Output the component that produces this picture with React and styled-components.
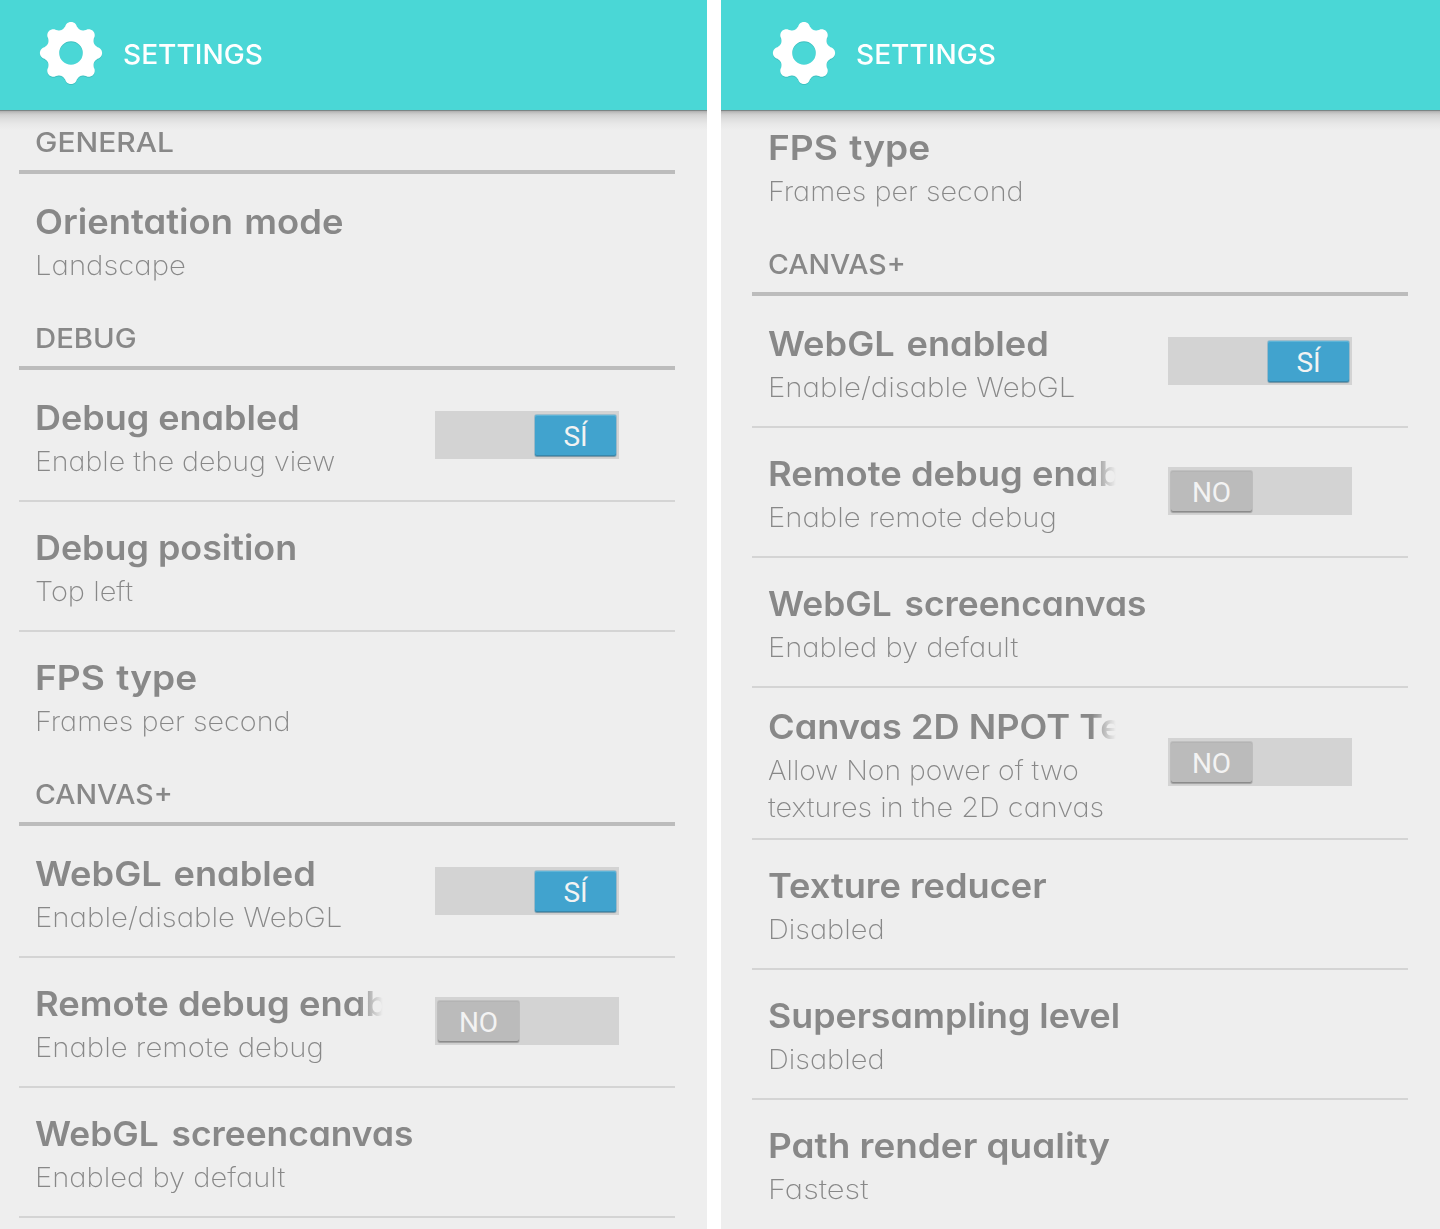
import React from "react";
import styled, { createGlobalStyle, css } from "styled-components";

const GlobalStyle = createGlobalStyle`
  * { box-sizing: border-box; }
  body {
    margin: 0;
    background: #fff;
    color: #888;
    font-family: Inter, "Liberation Sans", sans-serif;
    font-feature-settings: "cv11" 1;
  }
`;

const Screens = styled.main`
  display: grid;
  grid-template-columns: 707px 719px;
  column-gap: 14px;
  height: 1229px;
  overflow: hidden;
`;

const Screen = styled.section`
  display: flex;
  flex-direction: column;
  height: 1229px;
  overflow: hidden;
  background: #eee;
  --inset: ${(p) => p.$inset}px;
`;

const TopBar = styled.header`
  position: relative;
  z-index: 1;
  flex: none;
  display: flex;
  align-items: center;
  gap: 20px;
  height: 111px;
  padding: 0 0 3px calc(39px + var(--inset));
  background: #4ad7d6;
  border-bottom: 1px solid #7b8585;
`;

const Wide = styled.span`
  display: inline-block;
  transform: scaleX(${(p) => p.$ratio});
  transform-origin: 0 50%;
  word-spacing: ${(p) => p.$gap || 0}px;
`;

const Title = styled.h1`
  margin: 0;
  color: #fff;
  font-size: 27.5px;
  font-weight: 500;
  line-height: 40px;
`;

const Gear = styled.svg`
  display: block;
  width: 64px;
  height: 64px;
  margin-bottom: 2px;
  filter: drop-shadow(0 1px 0.5px rgba(0, 80, 80, 0.16));
`;

const Viewport = styled.div`
  flex: 1;
  min-height: 0;
  overflow: hidden;
  background: linear-gradient(
    #adadad 0,
    #c4c4c4 2px,
    #d2d2d2 4px,
    #dedede 8px,
    #e8e8e8 13px,
    #eee 19px
  );
`;

const List = styled.div`
  width: 656px;
  margin-left: calc(19px + var(--inset));
  margin-top: ${(p) => -p.$scrolled}px;
`;

const SectionHeading = styled.h2`
  height: 66px;
  margin: 0 0 2px;
  padding: 14px 16px 0;
  border-bottom: 4px solid #bcbcbc;
  font-size: 27.5px;
  font-weight: 530;
  line-height: 40px;
`;

const Row = styled.div`
  display: flex;
  align-items: center;
  justify-content: space-between;
  box-sizing: content-box;
  min-height: ${(p) => (p.$tall ? 150 : 128)}px;
  padding: 0 56px 0 16px;
  ${(p) => p.$divider && css`border-bottom: 2px solid #d4d4d4;`}
`;

const Labels = styled.div`
  flex: ${(p) => (p.$narrow ? "0 0 349px" : "1")};
  min-width: 0;
  padding-top: ${(p) => (p.$tall ? 1 : 0)}px;
`;

const Name = styled.div`
  white-space: nowrap;
  font-size: 34.4px;
  font-weight: 600;
  line-height: 50px;
  height: 50px;
  ${(p) =>
    p.$fade &&
    css`
      overflow: hidden;
      mask-image: linear-gradient(to left, transparent 1px, #000 25px);
    `}
`;

const Summary = styled.div`
  white-space: nowrap;
  font-size: 27.5px;
  font-weight: 200;
  line-height: 37px;
  height: 37px;
`;

const Track = styled.div`
  flex: none;
  display: flex;
  justify-content: ${(p) => (p.$on ? "flex-end" : "flex-start")};
  width: 184px;
  height: 48px;
  margin-bottom: 2px;
  padding: 4px 3px 3px;
  background: #d3d3d3;
`;

const Thumb = styled.div`
  width: 81px;
  height: 41px;
  border-radius: 2px;
  color: #f3f3f3;
  font-family: Roboto, "Liberation Sans", sans-serif;
  font-size: 28px;
  font-weight: 400;
  line-height: 43px;
  text-align: center;
  background: ${(p) => (p.$on ? "#41a3ce" : "#bbb")};
  box-shadow: ${(p) =>
    p.$on
      ? "inset 0 1px #5fb5d8, inset 0 -1px #3887ab, 0 0 0 1px rgba(65,150,190,.35), 0 1px 1px rgba(0,0,0,.3)"
      : "inset 0 1px #b4b4b4, inset 0 -1px #8b8b8b, 0 0 0 1px rgba(150,150,150,.3), 0 1px 1px rgba(0,0,0,.2)"};
`;

const gearOutline = (() => {
  const points = [];
  for (let i = 0; i < 320; i += 1) {
    const a = (i / 320) * Math.PI * 2;
    const wave = Math.cos(8 * a);
    const r = 28 + 3.1 * Math.sign(wave) * Math.abs(wave) ** 0.72;
    points.push(`${(32 + r * Math.cos(a)).toFixed(2)} ${(32 + r * Math.sin(a)).toFixed(2)}`);
  }
  return `M${points.join("L")}Z`;
})();

function GearIcon() {
  return (
    <Gear viewBox="0 0 64 64" aria-hidden="true">
      <path
        fill="#fff"
        fillRule="evenodd"
        d={`${gearOutline}M43.8 32A11.8 11.8 0 1 0 20.2 32A11.8 11.8 0 1 0 43.8 32Z`}
      />
    </Gear>
  );
}

function Toggle({ on }) {
  return (
    <Track $on={on} role="switch" aria-checked={on}>
      <Thumb $on={on}>{on ? "SÍ" : "NO"}</Thumb>
    </Track>
  );
}

const fps = { name: "FPS type", ratio: 1.078, gap: 2, lines: [["Frames per second", 1.047]] };

const webgl = [
  { name: "WebGL enabled", ratio: 1.053, gap: 2.5, lines: [["Enable/disable WebGL", 1.07]], on: true },
  { name: "Remote debug enabled", ratio: 1.058, lines: [["Enable remote debug", 1.066]], on: false },
  { name: "WebGL screencanvas", ratio: 1.027, gap: 4, lines: [["Enabled by default", 1.059]] },
];

const leftScreen = [
  {
    heading: "GENERAL",
    ratio: 1.09,
    rows: [{ name: "Orientation mode", ratio: 1.058, gap: 2, lines: [["Landscape", 1.067]] }],
  },
  {
    heading: "DEBUG",
    ratio: 1.065,
    rows: [
      { name: "Debug enabled", ratio: 1.046, lines: [["Enable the debug view", 1.038]], on: true },
      { name: "Debug position", ratio: 1.043, lines: [["Top left", 1.054]] },
      fps,
    ],
  },
  { heading: "CANVAS+", ratio: 1.036, rows: webgl, continues: true },
];

const rightScreen = [
  { rows: [fps] },
  {
    heading: "CANVAS+",
    ratio: 1.036,
    rows: [
      ...webgl,
      {
        name: "Canvas 2D NPOT Textures",
        ratio: 1.052,
        lines: [
          ["Allow Non power of two", 1.028],
          ["textures in the 2D canvas", 1.05],
        ],
        on: false,
      },
      { name: "Texture reducer", ratio: 1.053, lines: [["Disabled", 1.055]] },
      { name: "Supersampling level", ratio: 1.04, lines: [["Disabled", 1.055]] },
      { name: "Path render quality", ratio: 1.073, lines: [["Fastest", 1.123]] },
    ],
  },
];

function Setting({ item, divider }) {
  const hasToggle = item.on !== undefined;
  const tall = item.lines.length > 1;
  return (
    <Row $divider={divider} $tall={tall}>
      <Labels $narrow={hasToggle} $tall={tall}>
        <Name $fade={hasToggle}>
          <Wide $ratio={item.ratio} $gap={item.gap}>{item.name}</Wide>
        </Name>
        {item.lines.map(([line, ratio]) => (
          <Summary key={line}>
            <Wide $ratio={ratio}>{line}</Wide>
          </Summary>
        ))}
      </Labels>
      {hasToggle && <Toggle on={item.on} />}
    </Row>
  );
}

function SettingsScreen({ sections, inset, scrolled }) {
  return (
    <Screen $inset={inset}>
      <TopBar>
        <GearIcon />
        <Title>
          <Wide $ratio={1.022}>SETTINGS</Wide>
        </Title>
      </TopBar>
      <Viewport>
        <List $scrolled={scrolled}>
          {sections.map((section, s) => (
            <React.Fragment key={s}>
              {section.heading && (
                <SectionHeading>
                  <Wide $ratio={section.ratio}>{section.heading}</Wide>
                </SectionHeading>
              )}
              {section.rows.map((item, i) => (
                <Setting
                  key={item.name}
                  item={item}
                  divider={section.continues || i < section.rows.length - 1}
                />
              ))}
            </React.Fragment>
          ))}
        </List>
      </Viewport>
    </Screen>
  );
}

export default function App() {
  return (
    <>
      <GlobalStyle />
      <Screens>
        <SettingsScreen sections={leftScreen} inset={0} scrolled={3} />
        <SettingsScreen sections={rightScreen} inset={12} scrolled={9} />
      </Screens>
    </>
  );
}
